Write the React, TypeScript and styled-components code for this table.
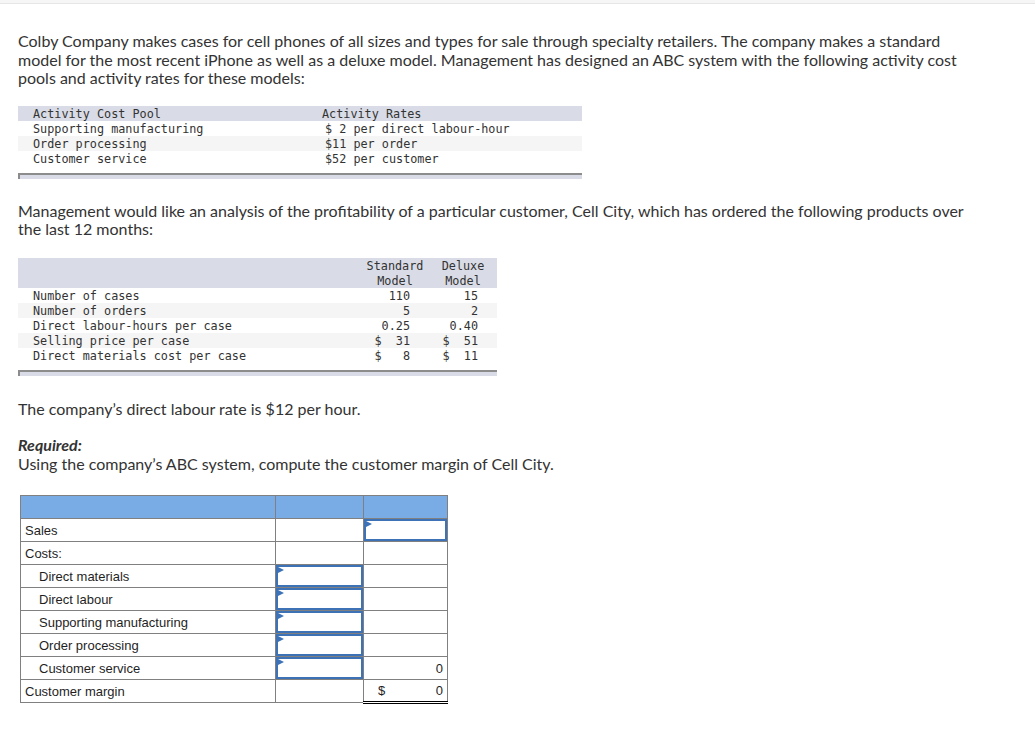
import styled, { createGlobalStyle } from "styled-components";

const GlobalStyle = createGlobalStyle`
  html, body {
    margin: 0;
    padding: 0;
    background: #ffffff;
  }
  body {
    font-family: Lato, "Open Sans", Arial, sans-serif;
    color: #333333;
  }
`;

const TopBar = styled.div`
  height: 3px;
  background: #f6f6f6;
  border-bottom: 1px solid #e6e6e6;
`;

const Page = styled.div`
  padding: 0 18px;
`;

const Para = styled.p<{ $top: number }>`
  margin: ${(p) => p.$top}px 0 0;
  width: 960px;
  font-size: 16px;
  line-height: 18.5px;
  color: #333333;
`;

const Required = styled.strong`
  display: block;
  font-style: italic;
  font-weight: 700;
`;

const MonoTable = styled.div<{ $top: number; $width: number; $cols: string }>`
  margin-top: ${(p) => p.$top}px;
  width: ${(p) => p.$width}px;
  display: grid;
  grid-template-columns: ${(p) => p.$cols};
  font-family: "DejaVu Sans Mono", "Liberation Mono", monospace;
  font-size: 11.8px;
  line-height: 15px;
  color: #333333;
  white-space: pre;
`;

const MonoRow = styled.div<{ $shade?: "head" | "light" }>`
  display: contents;
  & > * {
    background: ${(p) =>
      p.$shade === "head" ? "#d9dce6" : p.$shade === "light" ? "#f5f5f5" : "#ffffff"};
  }
`;

const MonoCell = styled.div<{ $align?: "left" | "right" | "center"; $padL?: number; $padR?: number }>`
  text-align: ${(p) => p.$align ?? "left"};
  padding: 1px ${(p) => p.$padR ?? 0}px 0 ${(p) => p.$padL ?? 0}px;
  height: 15px;
  box-sizing: border-box;
`;

const HeadCell = styled(MonoCell)`
  height: 30px;
  padding-top: 1px;
`;

const TableFoot = styled.div<{ $width: number }>`
  margin-top: 7px;
  width: ${(p) => p.$width}px;
  height: 6px;
  box-sizing: border-box;
  background: #d9dce6;
  border-top: 2px solid #8c8c8c;
  border-left: 2px solid #8c8c8c;
`;

const AnswerTable = styled.table`
  margin-top: 22px;
  margin-left: 2px;
  border-collapse: collapse;
  font-family: "Liberation Sans", Arial, sans-serif;
  font-size: 13px;
  color: #1f1f1f;
  table-layout: fixed;
`;

const Th = styled.th<{ $w: number }>`
  width: ${(p) => p.$w}px;
  height: 23px;
  background: #79ace4;
  border: 1px solid #808080;
  padding: 0;
  box-sizing: border-box;
`;

const Td = styled.td<{ $indent?: boolean; $total?: boolean; $right?: boolean }>`
  height: 23px;
  border: 1px solid #808080;
  padding: 0 4px 0 ${(p) => (p.$indent ? 18 : 4)}px;
  box-sizing: border-box;
  white-space: nowrap;
  text-align: ${(p) => (p.$right ? "right" : "left")};
  ${(p) =>
    p.$total
      ? `border-top: 1px solid #000; border-bottom: 3px double #000;`
      : ""}
`;

const InputCell = styled.td`
  height: 23px;
  border: 1px solid #808080;
  padding: 0;
  box-sizing: border-box;
`;

const InputBox = styled.div`
  position: relative;
  height: 22px;
  box-sizing: border-box;
  border: 2px solid #3d72b7;
  &::before {
    content: "";
    position: absolute;
    left: 0;
    top: 0;
    border-left: 6px solid #3d72b7;
    border-top: 3.5px solid transparent;
    border-bottom: 3.5px solid transparent;
  }
`;

const Amount = styled.div`
  display: flex;
  justify-content: space-between;
  padding-left: 10px;
`;

const rates = [
  ["Supporting manufacturing", "$ 2 per direct labour-hour"],
  ["Order processing", "$11 per order"],
  ["Customer service", "$52 per customer"],
];

const products = [
  ["Number of cases", "110", "15"],
  ["Number of orders", "5", "2"],
  ["Direct labour-hours per case", "0.25", "0.40"],
  ["Selling price per case", "$  31", "$  51"],
  ["Direct materials cost per case", "$   8", "$  11"],
];

const costRows = [
  "Direct materials",
  "Direct labour",
  "Supporting manufacturing",
  "Order processing",
];

export default function App() {
  return (
    <>
      <GlobalStyle />
      <TopBar />
      <Page>
        <Para $top={28}>
          Colby Company makes cases for cell phones of all sizes and types for sale through
          specialty retailers. The company makes a standard model for the most recent iPhone as
          well as a deluxe model. Management has designed an ABC system with the following
          activity cost pools and activity rates for these models:
        </Para>

        <MonoTable $top={18} $width={564} $cols="304px 1fr">
          <MonoRow $shade="head">
            <MonoCell $padL={15}>Activity Cost Pool</MonoCell>
            <MonoCell>Activity Rates</MonoCell>
          </MonoRow>
          {rates.map(([pool, rate], i) => (
            <MonoRow key={pool} $shade={i === 1 ? "light" : undefined}>
              <MonoCell $padL={15}>{pool}</MonoCell>
              <MonoCell $padL={3}>{rate}</MonoCell>
            </MonoRow>
          ))}
        </MonoTable>
        <TableFoot $width={564} />

        <Para $top={23}>
          Management would like an analysis of the profitability of a particular customer, Cell
          City, which has ordered the following products over the last 12 months:
        </Para>

        <MonoTable $top={19} $width={479} $cols="348px 58px 10px 58px 5px">
          <MonoRow $shade="head">
            <HeadCell />
            <HeadCell $align="center">{"Standard\nModel"}</HeadCell>
            <HeadCell />
            <HeadCell $align="center">{"Deluxe\nModel"}</HeadCell>
            <HeadCell />
          </MonoRow>
          {products.map(([label, std, del], i) => (
            <MonoRow key={label} $shade={i % 2 === 1 ? "light" : undefined}>
              <MonoCell $padL={15}>{label}</MonoCell>
              <MonoCell $align="right" $padR={14}>{std}</MonoCell>
              <MonoCell />
              <MonoCell $align="right" $padR={14}>{del}</MonoCell>
              <MonoCell />
            </MonoRow>
          ))}
        </MonoTable>
        <TableFoot $width={479} />

        <Para $top={24}>The company’s direct labour rate is $12 per hour.</Para>
        <Para $top={18}>
          <Required>Required:</Required>
          Using the company’s ABC system, compute the customer margin of Cell City.
        </Para>

        <AnswerTable>
          <thead>
            <tr>
              <Th $w={255} />
              <Th $w={88} />
              <Th $w={84} />
            </tr>
          </thead>
          <tbody>
            <tr>
              <Td>Sales</Td>
              <Td />
              <InputCell>
                <InputBox />
              </InputCell>
            </tr>
            <tr>
              <Td>Costs:</Td>
              <Td />
              <Td />
            </tr>
            {costRows.map((row) => (
              <tr key={row}>
                <Td $indent>{row}</Td>
                <InputCell>
                  <InputBox />
                </InputCell>
                <Td />
              </tr>
            ))}
            <tr>
              <Td $indent>Customer service</Td>
              <InputCell>
                <InputBox />
              </InputCell>
              <Td $right>0</Td>
            </tr>
            <tr>
              <Td>Customer margin</Td>
              <Td />
              <Td $total>
                <Amount>
                  <span>$</span>
                  <span>0</span>
                </Amount>
              </Td>
            </tr>
          </tbody>
        </AnswerTable>
      </Page>
    </>
  );
}
